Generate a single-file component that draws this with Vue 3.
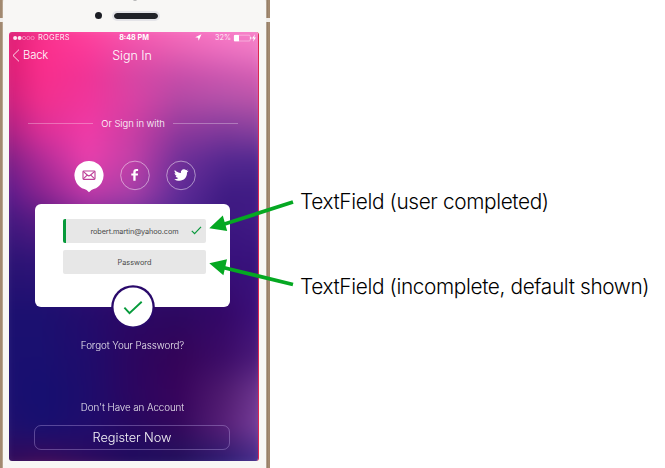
<script setup>
// Colour rows of the wallpaper: [y inside the screen, seven colours left to right]
const rows = [
  [0, 'd01870,f2358c,ff4ba0,ff62b4,ff74c2,ff82cc,f884c4'],
  [28, 'd8186c,fb2f8c,fb3a9a,ec50aa,e862b4,ee70c0,f080c8'],
  [53, 'd01a70,f82e8c,f03496,d846a4,c84eaa,cc58b0,d860b4'],
  [78, 'c01c78,f0308e,f0369c,d842a4,b048a4,b050a8,b854a8'],
  [108, '981c7c,d83098,f03ca8,c83ea4,8c389c,7c389a,84409c'],
  [133, '701c80,b02c98,e840ac,c040a8,703098,542890,502890'],
  [163, '50188a,8c2490,c03aa8,a840a8,602c98,401c84,401c84'],
  [188, '401880,5c1c84,802c98,70309c,502890,3c1880,441c88'],
  [228, '2c1474,301478,40147c,401880,381478,38107c,38147c'],
  [278, '1c1070,1c1070,240c6c,2c0864,2c0860,340868,401480'],
  [318, '1a1070,1a1070,200c6c,2c0660,340458,3c0c68,502080'],
  [353, '1c1070,160f70,1e0d6c,2c0660,38045c,501c70,78409a'],
  [383, '20106c,181070,200c6c,280860,34085c,582078,8048a4'],
  [408, '2c0c60,300c60,280c64,200c60,28105c,381c70,583494'],
  [429, '300c54,540c50,400c54,240c5c,1c1060,28207c,443898'],
]
const layers = rows.map(([y, list], i) => {
  const from = i ? rows[i - 1][0] : -1
  return {
    backgroundImage: `linear-gradient(90deg, ${list.split(',').map(c => '#' + c).join(', ')})`,
    maskImage: `linear-gradient(180deg, transparent ${from}px, #000 ${y}px)`,
  }
})
</script>

<template>
  <main class="page">
    <section class="phone">
      <i class="antenna"></i>
      <div class="body">
        <header class="earpiece"><i class="sensor"></i><i class="camera"></i><i class="speaker"></i></header>
        <div class="screen">
          <div class="wallpaper">
            <div v-for="(layer, i) in layers" :key="i" class="layer" :style="layer"></div>
          </div>
          <div class="content">
            <div class="status">
              <div class="carrier">
                <svg width="22" height="6" viewBox="0 0 22 6">
                  <g fill="#fff"><circle cx="2.1" cy="3" r="2" /><circle cx="6.6" cy="3" r="2" /></g>
                  <g fill="none" stroke="#fff" stroke-width=".6" opacity=".75"><circle cx="11" cy="3" r="1.7" /><circle cx="15.3" cy="3" r="1.7" /><circle cx="19.6" cy="3" r="1.7" /></g>
                </svg>
                <span>ROGERS</span>
              </div>
              <b class="time">8:48 PM</b>
              <div class="power">
                <svg class="loc" width="7" height="7" viewBox="0 0 7 7"><path d="M6.5.3 3.6 6.7 3.1 3.8.2 3.2Z" fill="#fff" /></svg>
                <span class="pct">32%</span>
                <svg width="24" height="8" viewBox="0 0 24 8">
                  <rect x="1.2" y="1.2" width="16" height="5.8" rx="1" fill="none" stroke="#fff" stroke-width=".6" opacity=".65" />
                  <rect x="1" y="1" width="5" height="6.2" rx=".5" fill="#fff" />
                  <path d="M17.8 3v2.2" stroke="#fff" />
                  <path d="M22 .3 19 4.4h1.8L20 7.7l3-4.2h-1.8Z" fill="#fff" />
                </svg>
              </div>
            </div>
            <nav class="nav">
              <a class="back"><svg width="8" height="13" viewBox="0 0 8 13"><path d="M7 .6 1 6.5 7 12.4" fill="none" stroke="#fff" stroke-width=".85" /></svg><span>Back</span></a>
              <span class="title">Sign In</span>
            </nav>
            <div class="divider"><i></i><span>Or Sign in with</span><i></i></div>
            <div class="social">
              <svg width="30" height="33" viewBox="0 0 30 33">
                <path d="M15 1a14.4 14.4 0 0 1 4.6 28.1Q17.6 29.7 15 32.2 12.4 29.7 10.4 29.1A14.4 14.4 0 0 1 15 1Z" fill="#fff" />
                <g fill="none" stroke="#bd4098" stroke-width="1.15"><rect x="9" y="11" width="12" height="8.4" rx=".8" /><path d="m9.2 11.4 4.3 3.8q1.4 1.2 2.8 0l4.4-3.8M9.3 18.900l3.600-3.500M20.700 18.900l-3.600-3.500" /></g>
              </svg>
              <svg width="30" height="33" viewBox="0 0 30 33">
                <circle cx="15" cy="15.400" r="14.300" fill="none" stroke="#fff" stroke-width=".75" opacity=".65" />
                <path d="M13.300 20.800v-5.200h-2v-2.100h2v-1.300q0-3.100 3-3.100h1.800v2h-1.300q-1.200 0-1.200 1.200v1.200h2.500l-.3 2.100h-2.200v5.200Z" fill="#fff" />
              </svg>
              <svg width="30" height="33" viewBox="0 0 30 33">
                <circle cx="15" cy="15.400" r="14.300" fill="none" stroke="#fff" stroke-width=".75" opacity=".65" />
                <path d="M8.800 10.100c1.500 1.700 3.600 2.800 6.100 2.900-.4-2 1-3.800 3-3.800 1 0 1.600.4 2.200 1l1.600-.7-.9 1.500 1.800-.2-1.600 1.700c.2 4.900-3.200 8.200-7.500 8.200-2 0-3.800-.5-5.200-1.500 1.600.1 3-.3 4.100-1.200-1.300-.1-2.300-.8-2.800-2h1.300c-1.400-.4-2.300-1.500-2.300-2.900l1.300.3c-1.300-.9-1.700-2.100-1.100-3.300Z" fill="#fff" />
              </svg>
            </div>
            <div class="card">
              <div class="field done"><span>robert.martin@yahoo.com</span><svg class="tick" width="11" height="9" viewBox="0 0 11 9"><path d="m.8 4.800 2.800 2.900L10 .8" fill="none" stroke="#0b9a3e" stroke-width="1.200" /></svg></div>
              <div class="field"><span>Password</span></div>
              <svg class="submit" width="44" height="44" viewBox="0 0 44 44">
                <circle cx="22" cy="22" r="21.800" fill="#29096a" /><circle cx="22" cy="22" r="19.500" fill="#fff" />
                <path d="m13.400 22.700 5.100 5.500 12.200-11.500" fill="none" stroke="#079b3c" stroke-width="1.900" />
              </svg>
            </div>
            <a class="forgot">Forgot Your Password?</a>
            <span class="noacct">Don't Have an Account</span>
            <a class="register"><span>Register Now</span></a>
          </div>
        </div>
      </div>
    </section>
    <section class="notes">
      <p class="first">TextField (user completed)</p>
      <p class="second">TextField (incomplete, default shown)</p>
    </section>
    <svg class="arrows" width="90" height="90" viewBox="205 200 90 90">
      <g stroke="#05a822" stroke-width="3.800"><path d="M293 202 223 224.500M293 284.500 223 267.500" /></g>
      <g fill="#05a822"><path d="m209.300 228.300 13.500-12.800 4.400 15.600ZM209.300 263.300l17.700-4-3.600 16Z" /></g>
    </svg>
  </main>
</template>

<style>
body { margin: 0; background: #fff; }
</style>

<style scoped>
.page { position: relative; display: flex; width: 665px; height: 468px; overflow: hidden; background: #fff; font-family: Inter, "Liberation Sans", sans-serif; font-weight: 300; }
.phone { position: relative; box-sizing: border-box; width: 270px; height: 468px; padding: 0 4px 0 3px; background: linear-gradient(90deg, #a28970 0 2px, #cfc2b3 3px, #d8cec2 266px, #917a63 267px, #aa9075 269px, #9a8068 270px); }
.antenna { position: absolute; left: 0; top: 18px; width: 270px; height: 4px; background: #f1eeea; }
.body { position: relative; box-sizing: border-box; height: 480px; margin-top: -12px; padding: 12px 7px 0 6px; border-radius: 15px 15px 0 0; background: #f8f7f5; }
.earpiece { position: relative; box-sizing: border-box; display: flex; align-items: center; height: 32px; padding: 0 0 1px 86px; gap: 10px; }
.sensor { position: absolute; left: 124px; top: -2px; width: 4px; height: 3px; border-radius: 50%; background: #b4b4b6; }
.camera { width: 7px; height: 7px; border-radius: 50%; background: #1c1e24; }
.speaker { box-sizing: content-box; width: 44px; height: 6px; border: 2px solid #e4e4e8; border-radius: 6px; background: #202228; background-clip: padding-box; }
.screen { position: relative; box-sizing: border-box; width: 250px; height: 429px; border-radius: 3px; overflow: hidden; border-right: 1px solid #dc2850; }
.wallpaper { position: absolute; inset: 0; filter: blur(7px); transform: scale(1.1, 1.06); }
.layer { position: absolute; inset: 0; }
.content { position: relative; display: flex; flex-direction: column; width: 250px; height: 429px; color: #fff; }
.status { display: grid; grid-template-columns: 1fr 40px 1fr; align-items: center; height: 11px; font-size: 7.2px; line-height: 11px; white-space: nowrap; }
.carrier { display: flex; align-items: center; gap: 3px; padding-left: 4px; font-size: 7.5px; letter-spacing: .25px; font-weight: 400; opacity: .9; }
.time { font-weight: 700; font-size: 7.2px; text-align: center; letter-spacing: 0; }
.power { display: flex; align-items: center; justify-content: flex-end; padding-right: 2px; }
.loc { margin-right: 13px; }
.pct { margin-right: 2px; font-size: 7.4px; }
.nav { display: grid; grid-template-columns: 1fr 60px 1fr; align-items: center; height: 24px; font-size: 12.5px; }
.back { display: flex; align-items: center; gap: 3px; padding-left: 3px; font-size: 11.3px; letter-spacing: -.2px; }
.title { text-align: center; letter-spacing: -.05px; margin-right: 4px; }
.divider { display: flex; align-items: center; justify-content: space-between; height: 16px; margin: 48px 21px 0 19px; font-size: 9.5px; letter-spacing: -.06px; }
.divider i { width: 65px; height: 1px; background: rgba(255, 255, 255, .3); }
.social { display: flex; gap: 16.200px; height: 33px; margin: 29px 0 0 64.600px; }
.social svg { flex: none; }
.card { position: relative; box-sizing: border-box; width: 195px; height: 103px; margin: 11px 0 0 26px; padding: 15px 24px 0 28px; display: flex; flex-direction: column; gap: 7px; border-radius: 6px; background: #fff; }
.field { position: relative; box-sizing: border-box; display: flex; align-items: center; justify-content: center; height: 24px; border-radius: 2px; background: #e7e7e7; color: #4a4a4a; font-size: 7.3px; font-weight: 400; overflow: hidden; }
.done { border-left: 3px solid #089a3b; padding-right: 3px; letter-spacing: -.1px; }
.tick { position: absolute; right: 4px; top: 7px; }
.submit { position: absolute; left: 76px; top: 81px; }
.forgot, .noacct { width: 247px; text-align: center; font-size: 9.8px; line-height: 14px; letter-spacing: -.08px; opacity: .9; }
.forgot { margin-top: 32px; }
.noacct { margin-top: 48px; }
.register { box-sizing: border-box; display: flex; align-items: center; justify-content: center; width: 196px; height: 25px; margin: 10px 0 0 25px; border: 1px solid rgba(200, 180, 240, .35); border-radius: 7px; font-size: 12.8px; letter-spacing: -.06px; }
.register span { opacity: .95; }
.notes { display: flex; flex-direction: column; padding: 188px 0 0 30px; color: #000; font-size: 20.8px; white-space: nowrap; }
.notes p { margin: 0; line-height: 28px; letter-spacing: -.36px; }
.notes .second { margin-top: 57px; }
.arrows { position: absolute; left: 205px; top: 200px; }
</style>
